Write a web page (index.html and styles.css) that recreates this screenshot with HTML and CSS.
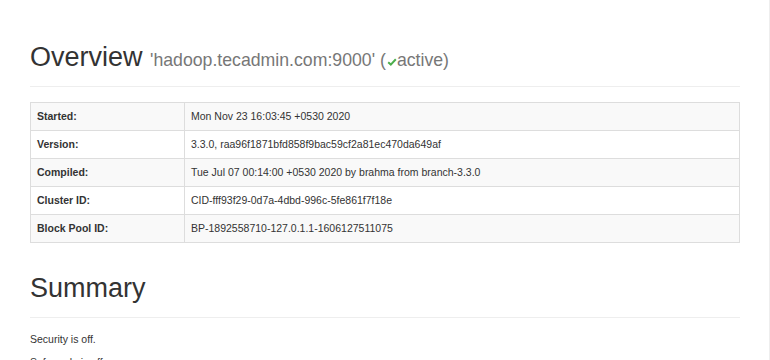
FILE: index.html
```html
<!DOCTYPE html>
<html>
<head>
<meta charset="utf-8">
<link rel="stylesheet" href="styles.css">
</head>
<body>
<div class="container">
  <div class="page-header first">
    <h1>Overview <small>'hadoop.tecadmin.com:9000' (<svg class="ok" width="10" height="8" viewBox="0 0 10 8"><path d="M1.2 4.3 L3.8 6.6 L8.8 1.2" fill="none" stroke="#4cae4c" stroke-width="2"/></svg>active)</small></h1>
  </div>
  <table class="info">
    <tr><th>Started:</th><td>Mon Nov 23 16:03:45 +0530 2020</td></tr>
    <tr><th>Version:</th><td>3.3.0, raa96f1871bfd858f9bac59cf2a81ec470da649af</td></tr>
    <tr><th>Compiled:</th><td>Tue Jul 07 00:14:00 +0530 2020 by brahma from branch-3.3.0</td></tr>
    <tr><th>Cluster ID:</th><td>CID-fff93f29-0d7a-4dbd-996c-5fe861f7f18e</td></tr>
    <tr><th>Block Pool ID:</th><td>BP-1892558710-127.0.1.1-1606127511075</td></tr>
  </table>
  <div class="page-header second">
    <h1>Summary</h1>
  </div>
  <p class="summary-first">Security is off.</p>
  <p>Safemode is off.</p>
</div>
</body>
</html>
```

FILE: styles.css
```css
html, body {
  margin: 0;
  padding: 0;
  background: #fff;
}
body {
  font-family: "Liberation Sans", Arial, sans-serif;
  font-size: 10.5px;
  line-height: 15px;
  color: #333;
  border-right: 1px solid #eee;
  min-height: 360px;
  box-sizing: border-box;
}
.container {
  width: 710px;
  padding-left: 30px;
}
.page-header {
  border-bottom: 1px solid #eee;
  padding-bottom: 14px;
}
.page-header.first {
  padding-top: 42px;
}
.page-header.second {
  margin-top: 30px;
}
h1 {
  margin: 0;
  font-size: 27px;
  line-height: 30px;
  font-weight: normal;
  color: #333;
}
h1 small {
  font-size: 17.7px;
  line-height: 1;
  color: #777;
}
.ok {
  display: inline-block;
  vertical-align: baseline;
  margin: 0 0 0 1px;
}
table.info {
  width: 100%;
  border-collapse: collapse;
  margin-top: 15px;
  border: 1px solid #ddd;
}
table.info th,
table.info td {
  border: 1px solid #ddd;
  padding: 6px 6px;
  text-align: left;
  vertical-align: top;
  line-height: 15px;
}
table.info th {
  width: 141px;
  font-weight: bold;
}
table.info tr:nth-child(odd) {
  background: #f9f9f9;
}
p {
  margin: 0 0 7.5px;
}
.summary-first {
  margin-top: 14px;
}
```
